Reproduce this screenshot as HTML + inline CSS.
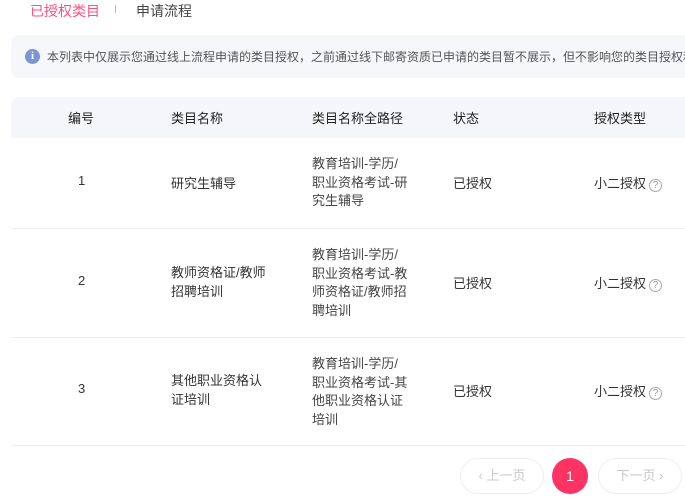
<!DOCTYPE html>
<html><head><meta charset="utf-8"><style>
*{margin:0;padding:0;box-sizing:border-box}
body{width:685px;height:500px;background:#fff;font-family:"Liberation Sans","Noto Sans CJK SC",sans-serif;font-size:13px;color:#333;position:relative;overflow:hidden}
.a{position:absolute;white-space:nowrap}
.tab1{left:30px;top:1px;color:#ff4f7a;font-size:14px}
.sep{left:115px;top:5px;width:1px;height:8px;background:#bbb}
.tab2{left:136px;top:1px;color:#444;font-size:14px}
.alert{left:11px;top:35px;width:690px;height:43px;background:#f5f7fa;border-radius:8px}
.alert .i{position:absolute;left:14px;top:14px;width:15px;height:15px;border-radius:50%;background:#7b95d1;color:#fff;font-size:11px;font-weight:bold;text-align:center;line-height:15px;font-family:"Liberation Serif",serif}
.alert .t{position:absolute;left:36px;top:13px;font-size:12px;color:#555;white-space:nowrap}
.thead{left:11px;top:97px;width:690px;height:41px;background:#f5f6f9;border-radius:8px 0 0 0}
.th{top:108px;color:#222}
.line{left:11px;width:690px;height:1px;background:#eee}
.path{left:312px;line-height:18.5px;color:#444}
.q{display:inline-block;width:13px;height:13px;border:1px solid #aaa;border-radius:50%;color:#999;font-size:10px;line-height:11px;text-align:center;vertical-align:0px;margin-left:3px}
.btn{top:458px;height:36px;border:1px solid #eee;border-radius:18px;color:#c8c8c8;text-align:center;line-height:34px;font-size:13px}
.cur{left:552px;top:458px;width:36px;height:36px;border-radius:50%;background:#ff3264;color:#fff;text-align:center;line-height:36px;font-size:14px}
</style></head><body>
<div class="a tab1">已授权类目</div><div class="a sep"></div><div class="a tab2">申请流程</div>
<div class="a alert"><div class="i">i</div><div class="t">本列表中仅展示您通过线上流程申请的类目授权，之前通过线下邮寄资质已申请的类目暂不展示，但不影响您的类目授权和使用</div></div>
<div class="a thead"></div>
<div class="a th" style="left:68px">编号</div>
<div class="a th" style="left:171px">类目名称</div>
<div class="a th" style="left:312px">类目名称全路径</div>
<div class="a th" style="left:453px">状态</div>
<div class="a th" style="left:594px">授权类型</div>

<div class="a" style="left:78px;top:173px">1</div>
<div class="a" style="left:171px;top:173px">研究生辅导</div>
<div class="a path" style="top:155px">教育培训-学历/<br>职业资格考试-研<br>究生辅导</div>
<div class="a" style="left:453px;top:173px">已授权</div>
<div class="a" style="left:594px;top:173px">小二授权<span class="q">?</span></div>
<div class="a line" style="top:228px"></div>

<div class="a" style="left:78px;top:273px">2</div>
<div class="a" style="left:171px;top:264px;line-height:18.5px">教师资格证/教师<br>招聘培训</div>
<div class="a path" style="top:246px">教育培训-学历/<br>职业资格考试-教<br>师资格证/教师招<br>聘培训</div>
<div class="a" style="left:453px;top:273px">已授权</div>
<div class="a" style="left:594px;top:273px">小二授权<span class="q">?</span></div>
<div class="a line" style="top:337px"></div>

<div class="a" style="left:78px;top:381px">3</div>
<div class="a" style="left:171px;top:372px;line-height:18.5px">其他职业资格认<br>证培训</div>
<div class="a path" style="top:355px">教育培训-学历/<br>职业资格考试-其<br>他职业资格认证<br>培训</div>
<div class="a" style="left:453px;top:381px">已授权</div>
<div class="a" style="left:594px;top:381px">小二授权<span class="q">?</span></div>
<div class="a line" style="top:445px"></div>

<div class="a btn" style="left:460px;width:84px">‹ 上一页</div>
<div class="a cur">1</div>
<div class="a btn" style="left:598px;width:84px">下一页 ›</div>
</body></html>
